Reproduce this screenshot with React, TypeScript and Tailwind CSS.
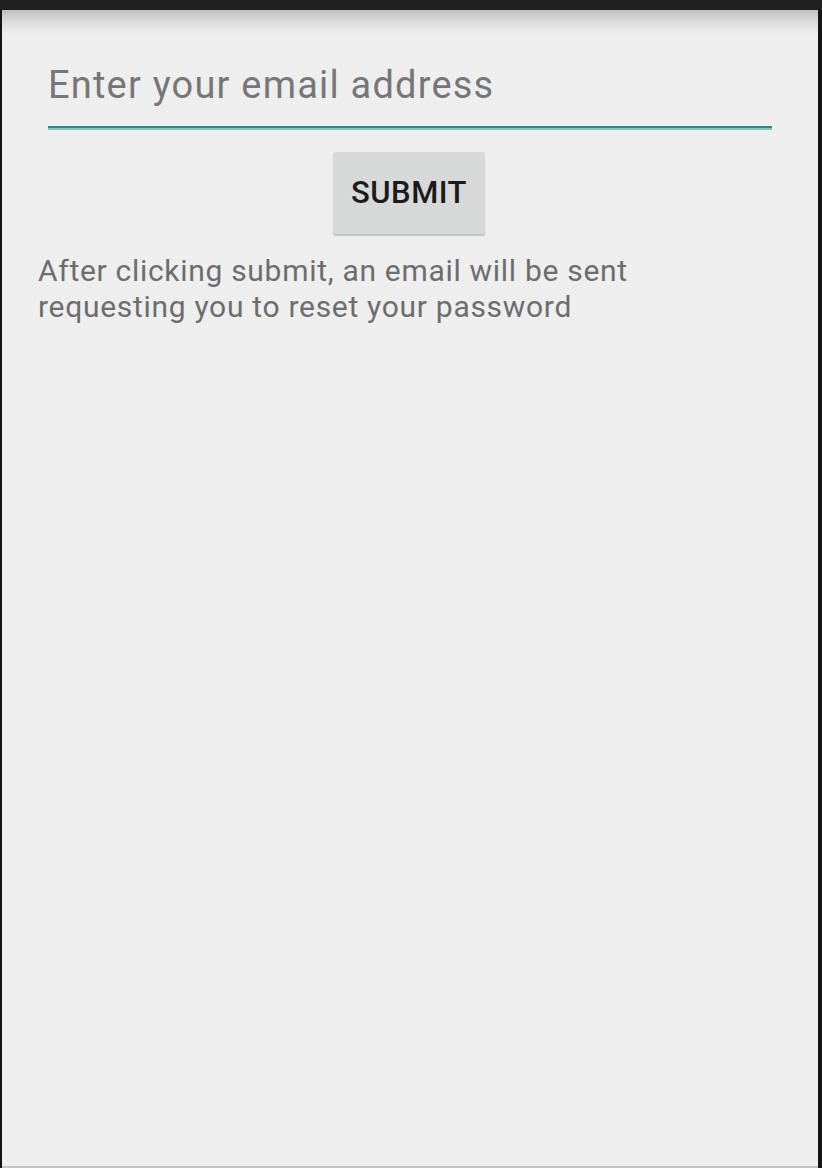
export default function App() {
  return (
    <div
      className="w-[822px] h-[1168px] bg-[#141414] flex flex-col overflow-hidden"
      style={{ fontFamily: "Roboto, 'Noto Sans', sans-serif" }}
    >
      <div className="h-[10px] bg-[#202020] shrink-0" />
      <div className="flex-1 ml-[2px] mr-[4px] bg-[#eeeeee] relative flex flex-col">
        <div className="absolute left-0 right-0 top-0 h-[24px] bg-gradient-to-b from-[#bfbfbf] via-[#dcdcdc] to-[#eeeeee] pointer-events-none" />
        <div className="relative pl-[46px] pr-[46px] pt-[53px]">
          <div className="text-[38px] leading-[44px] text-[#767676] tracking-[1.2px]">
            Enter your email address
          </div>
          <div className="mt-[19px] h-[2px] bg-[#36857a]" />
          <div className="h-[2px] bg-[#7fc4ba]" />
        </div>
        <div className="relative flex justify-center mt-[22px]">
          <div className="w-[152px] h-[82px] rounded-[3px] bg-[#d7d8d8] shadow-[0_2px_1px_rgba(0,0,0,0.18)] flex items-center justify-center text-[31px] font-medium text-[#1b1b1b] tracking-[0.5px] ml-[-2px]">
            SUBMIT
          </div>
        </div>
        <div className="relative pl-[36px] mt-[19px] text-[30px] leading-[36px] text-[#6d6d6d] tracking-[0.7px]">
          After clicking submit, an email will be sent
          <br />
          requesting you to reset your password
        </div>
      </div>
      <div className="h-[2px] ml-[2px] mr-[4px] bg-[#c4c4c4] shrink-0" />
    </div>
  );
}
